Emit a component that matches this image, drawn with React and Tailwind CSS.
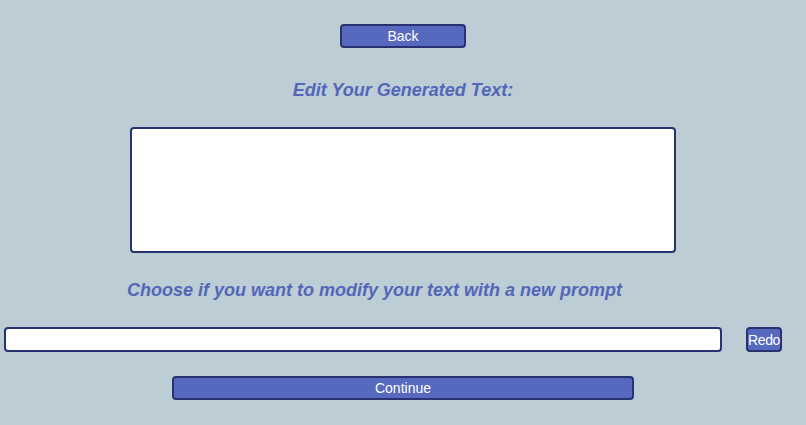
const App = () => {
  return (
    <div className="min-h-[425px] bg-[#bdcdd6] font-['Liberation_Sans',Arial,sans-serif] flex flex-col items-center pt-[24px]">
      <button className="w-[126px] h-[24px] bg-[#5669bf] border-2 border-[#283270] rounded-[4px] text-white text-[14px] leading-none">
        Back
      </button>

      <h1 className="mt-[31px] text-[18px] leading-[22px] font-bold italic text-[#5366b8]">
        Edit Your Generated Text:
      </h1>

      <textarea className="mt-[26px] w-[546px] h-[126px] bg-white border-2 border-[#283270] rounded-[4px] resize-none outline-none" />

      <h2 className="mt-[26px] w-full pl-[127px] text-left text-[18px] leading-[22px] font-bold italic text-[#5366b8]">
        Choose if you want to modify your text with a new prompt
      </h2>

      <div className="mt-[26px] w-full flex items-center pl-[4px]">
        <input type="text" className="w-[718px] h-[25px] bg-white border-2 border-[#283270] rounded-[4px] outline-none px-1" />
        <button className="ml-[24px] w-[36px] h-[25px] px-0 flex items-center justify-center overflow-visible bg-[#5669bf] border-2 border-[#283270] rounded-[4px] text-white text-[14px] leading-none tracking-[-0.4px]">
          Redo
        </button>
      </div>

      <button className="mt-[24px] w-[462px] h-[24px] bg-[#5669bf] border-2 border-[#283270] rounded-[4px] text-white text-[14px] leading-none">
        Continue
      </button>
    </div>
  );
};

export default App;
